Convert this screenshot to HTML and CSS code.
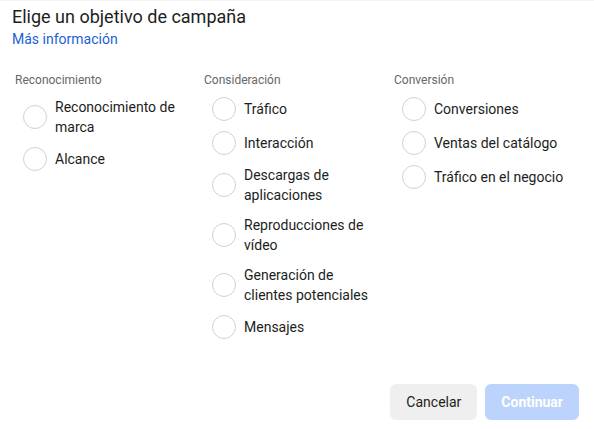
FILE: index.html
```html
<!DOCTYPE html>
<html lang="es">
<head>
<meta charset="utf-8">
<title>Elige un objetivo de campaña</title>
<link rel="stylesheet" href="styles.css">
</head>
<body>
<div class="dialog">
  <header class="head">
    <h1 class="title">Elige un objetivo de campaña</h1>
    <a class="more" href="#">Más información</a>
  </header>
  <div class="columns">
    <section class="col">
      <div class="label">Reconocimiento</div>
      <ul class="opts">
        <li class="opt"><span class="radio"></span><span class="txt">Reconocimiento de<br>marca</span></li>
        <li class="opt"><span class="radio"></span><span class="txt">Alcance</span></li>
      </ul>
    </section>
    <section class="col">
      <div class="label">Consideración</div>
      <ul class="opts">
        <li class="opt"><span class="radio"></span><span class="txt">Tráfico</span></li>
        <li class="opt"><span class="radio"></span><span class="txt">Interacción</span></li>
        <li class="opt"><span class="radio"></span><span class="txt">Descargas de<br>aplicaciones</span></li>
        <li class="opt"><span class="radio"></span><span class="txt">Reproducciones de<br>vídeo</span></li>
        <li class="opt"><span class="radio"></span><span class="txt">Generación de<br>clientes potenciales</span></li>
        <li class="opt"><span class="radio"></span><span class="txt">Mensajes</span></li>
      </ul>
    </section>
    <section class="col">
      <div class="label">Conversión</div>
      <ul class="opts">
        <li class="opt"><span class="radio"></span><span class="txt">Conversiones</span></li>
        <li class="opt"><span class="radio"></span><span class="txt">Ventas del catálogo</span></li>
        <li class="opt"><span class="radio"></span><span class="txt">Tráfico en el negocio</span></li>
      </ul>
    </section>
  </div>
  <footer class="foot">
    <button class="btn btn-cancel">Cancelar</button>
    <button class="btn btn-continue" disabled>Continuar</button>
  </footer>
</div>
</body>
</html>
```

FILE: styles.css
```css
html, body {
  margin: 0;
  padding: 0;
  background: #ffffff;
}
body {
  font-family: Roboto, "Liberation Sans", Arial, sans-serif;
  color: #1c1e21;
}
.dialog {
  height: 429px;
  box-sizing: border-box;
  display: flex;
  flex-direction: column;
  padding: 6px 15px 9px 12px;
  border-top: 1px solid #f4f4f4;
}
.head {
  display: flex;
  flex-direction: column;
  align-items: flex-start;
  margin-top: -1px;
}
.title {
  margin: 0;
  font-size: 18px;
  line-height: 22px;
  font-weight: 400;
  color: #1c1e21;
}
.more {
  margin-top: 1px;
  font-size: 14px;
  line-height: 20px;
  color: #1b5fd4;
  text-decoration: none;
}
.columns {
  display: grid;
  grid-template-columns: 189px 190px 1fr;
  margin-top: 23px;
  padding-left: 3px;
}
.label {
  font-size: 12px;
  line-height: 16px;
  color: #65676b;
}
.opts {
  list-style: none;
  margin: 9px 0 0;
  padding: 0 0 0 8px;
  display: flex;
  flex-direction: column;
  gap: 10px;
}
.opt {
  display: flex;
  align-items: center;
  gap: 8px;
  min-height: 24px;
}
.radio {
  flex: none;
  width: 24px;
  height: 24px;
  box-sizing: border-box;
  border: 1px solid #cfd1d5;
  border-radius: 50%;
}
.txt {
  font-size: 14px;
  line-height: 20px;
  color: #1c1e21;
}
.foot {
  margin-top: auto;
  display: flex;
  justify-content: flex-end;
  gap: 8px;
}
.btn {
  height: 36px;
  padding: 0 16px;
  border: none;
  border-radius: 6px;
  font-family: Roboto, "Liberation Sans", Arial, sans-serif;
  font-size: 14px;
}
.btn-cancel {
  background: #efefef;
  color: #1c1e21;
  font-weight: 400;
}
.btn-continue {
  background: #bcd4fb;
  color: #ffffff;
  font-weight: 700;
}
```
